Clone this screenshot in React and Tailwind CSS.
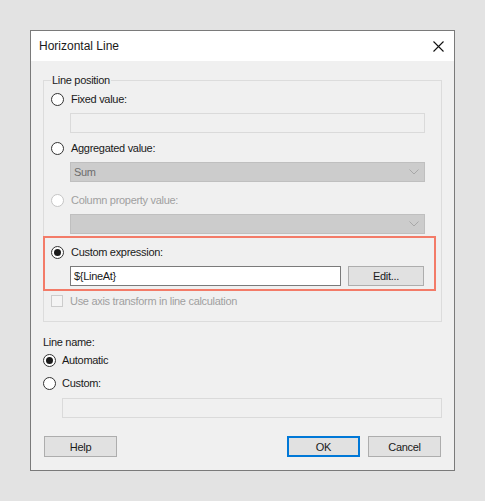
import React from 'react';

function Radio({ checked, disabled }) {
  const border = disabled ? 'border-[#c5c5c5]' : 'border-[#333333]';
  return (
    <span className={`flex items-center justify-center w-[13px] h-[13px] rounded-full border bg-white shrink-0 ${border}`}>
      {checked && <span className="w-[7px] h-[7px] rounded-full bg-[#1a1a1a]" />}
    </span>
  );
}

function RadioRow({ label, checked, disabled, gap = 'gap-[7px]' }) {
  return (
    <div className={`flex items-center h-[16px] ${gap}`}>
      <Radio checked={checked} disabled={disabled} />
      <span className={disabled ? 'text-[#a0a0a0]' : 'text-[#1a1a1a]'}>{label}</span>
    </div>
  );
}

function Chevron() {
  return (
    <svg width="10" height="6" viewBox="0 0 10 6" className="mr-[5px]">
      <path d="M0.5 0.5 L5 5 L9.5 0.5" fill="none" stroke="#a8a8a8" strokeWidth="1" />
    </svg>
  );
}

function Dropdown({ value }) {
  return (
    <div className="flex items-center justify-between h-[20px] ml-[26px] mr-[16px] bg-[#cccccc] border border-[#bfbfbf] pl-[3px] text-[#6d6d6d]">
      <span>{value}</span>
      <Chevron />
    </div>
  );
}

function Button({ children, primary }) {
  const border = primary ? 'border-2 border-[#0078d7]' : 'border border-[#adadad]';
  return (
    <button className={`w-[73px] h-[21px] bg-[#e1e1e1] flex items-center justify-center text-[#1a1a1a] ${border}`}>
      {children}
    </button>
  );
}

export default function App() {
  return (
    <div
      className="w-[485px] h-[501px] bg-[#e3e3e3] pt-[30px] pl-[30px] text-[11px] leading-[14px] tracking-[-0.3px]"
      style={{ fontFamily: '"Liberation Sans", Arial, sans-serif' }}
    >
      <div className="w-[425px] h-[441px] border border-[#7a7a7a] bg-[#f0f0f0] flex flex-col">
        {/* Title bar */}
        <div className="h-[30px] bg-white flex items-center justify-between pl-[8px] pr-[10px]">
          <span className="text-[#1a1a1a] text-[12px] tracking-normal">Horizontal Line</span>
          <svg width="11" height="11" viewBox="0 0 11 11">
            <path d="M0.5 0.5 L10.5 10.5 M10.5 0.5 L0.5 10.5" stroke="#111" strokeWidth="1.1" />
          </svg>
        </div>

        {/* Line position group */}
        <div className="relative mt-[19px] mx-[12px] h-[242px] border border-[#dcdcdc] flex flex-col">
          <span className="absolute left-[7px] top-[-8px] px-[1px] bg-[#f0f0f0] text-[#1a1a1a]">Line position</span>

          <div className="pl-[7px] mt-[10px]">
            <RadioRow label="Fixed value:" />
          </div>
          <div className="h-[20px] mt-[6px] ml-[26px] mr-[16px] border border-[#dadada] bg-[#f0f0f0]" />

          <div className="pl-[7px] mt-[7px]">
            <RadioRow label="Aggregated value:" />
          </div>
          <div className="mt-[6px]">
            <Dropdown value="Sum" />
          </div>

          <div className="pl-[7px] mt-[10px]">
            <RadioRow label="Column property value:" disabled />
          </div>
          <div className="mt-[6px]">
            <Dropdown value="" />
          </div>

          {/* Highlighted custom expression */}
          <div className="mt-[2px] ml-[-1px] w-[393px] h-[55px] border-2 border-[#f37b68] flex flex-col pl-[6px] pr-[10px]">
            <div className="mt-[6px]">
              <RadioRow label="Custom expression:" checked />
            </div>
            <div className="flex mt-[6px] pl-[19px] gap-[7px]">
              <div className="flex-1 h-[20px] bg-white border border-[#7a7a7a] flex items-center pl-[3px] text-[#1a1a1a]">
                {'${LineAt}'}
              </div>
              <button className="w-[76px] h-[20px] bg-[#e1e1e1] border border-[#adadad] flex items-center justify-center text-[#1a1a1a]">
                Edit...
              </button>
            </div>
          </div>

          <div className="flex items-center h-[16px] mt-[2px] pl-[7px] gap-[7px]">
            <span className="w-[12px] h-[12px] border border-[#cccccc] bg-[#f4f4f4]" />
            <span className="text-[#a0a0a0]">Use axis transform in line calculation</span>
          </div>
        </div>

        {/* Line name */}
        <div className="flex flex-col px-[12px]">
          <div className="h-[16px] mt-[12px] flex items-center text-[#1a1a1a]">Line name:</div>
          <div className="mt-[2px]">
            <RadioRow label="Automatic" checked gap="gap-[6px]" />
          </div>
          <div className="mt-[7px]">
            <RadioRow label="Custom:" gap="gap-[6px]" />
          </div>
          <div className="h-[20px] mt-[7px] ml-[19px] border border-[#dadada] bg-[#f0f0f0]" />
        </div>

        {/* Buttons */}
        <div className="flex items-center mt-[18px] px-[13px]">
          <Button>Help</Button>
          <div className="flex-1" />
          <Button primary>OK</Button>
          <div className="w-[8px]" />
          <Button>Cancel</Button>
        </div>
      </div>
    </div>
  );
}
